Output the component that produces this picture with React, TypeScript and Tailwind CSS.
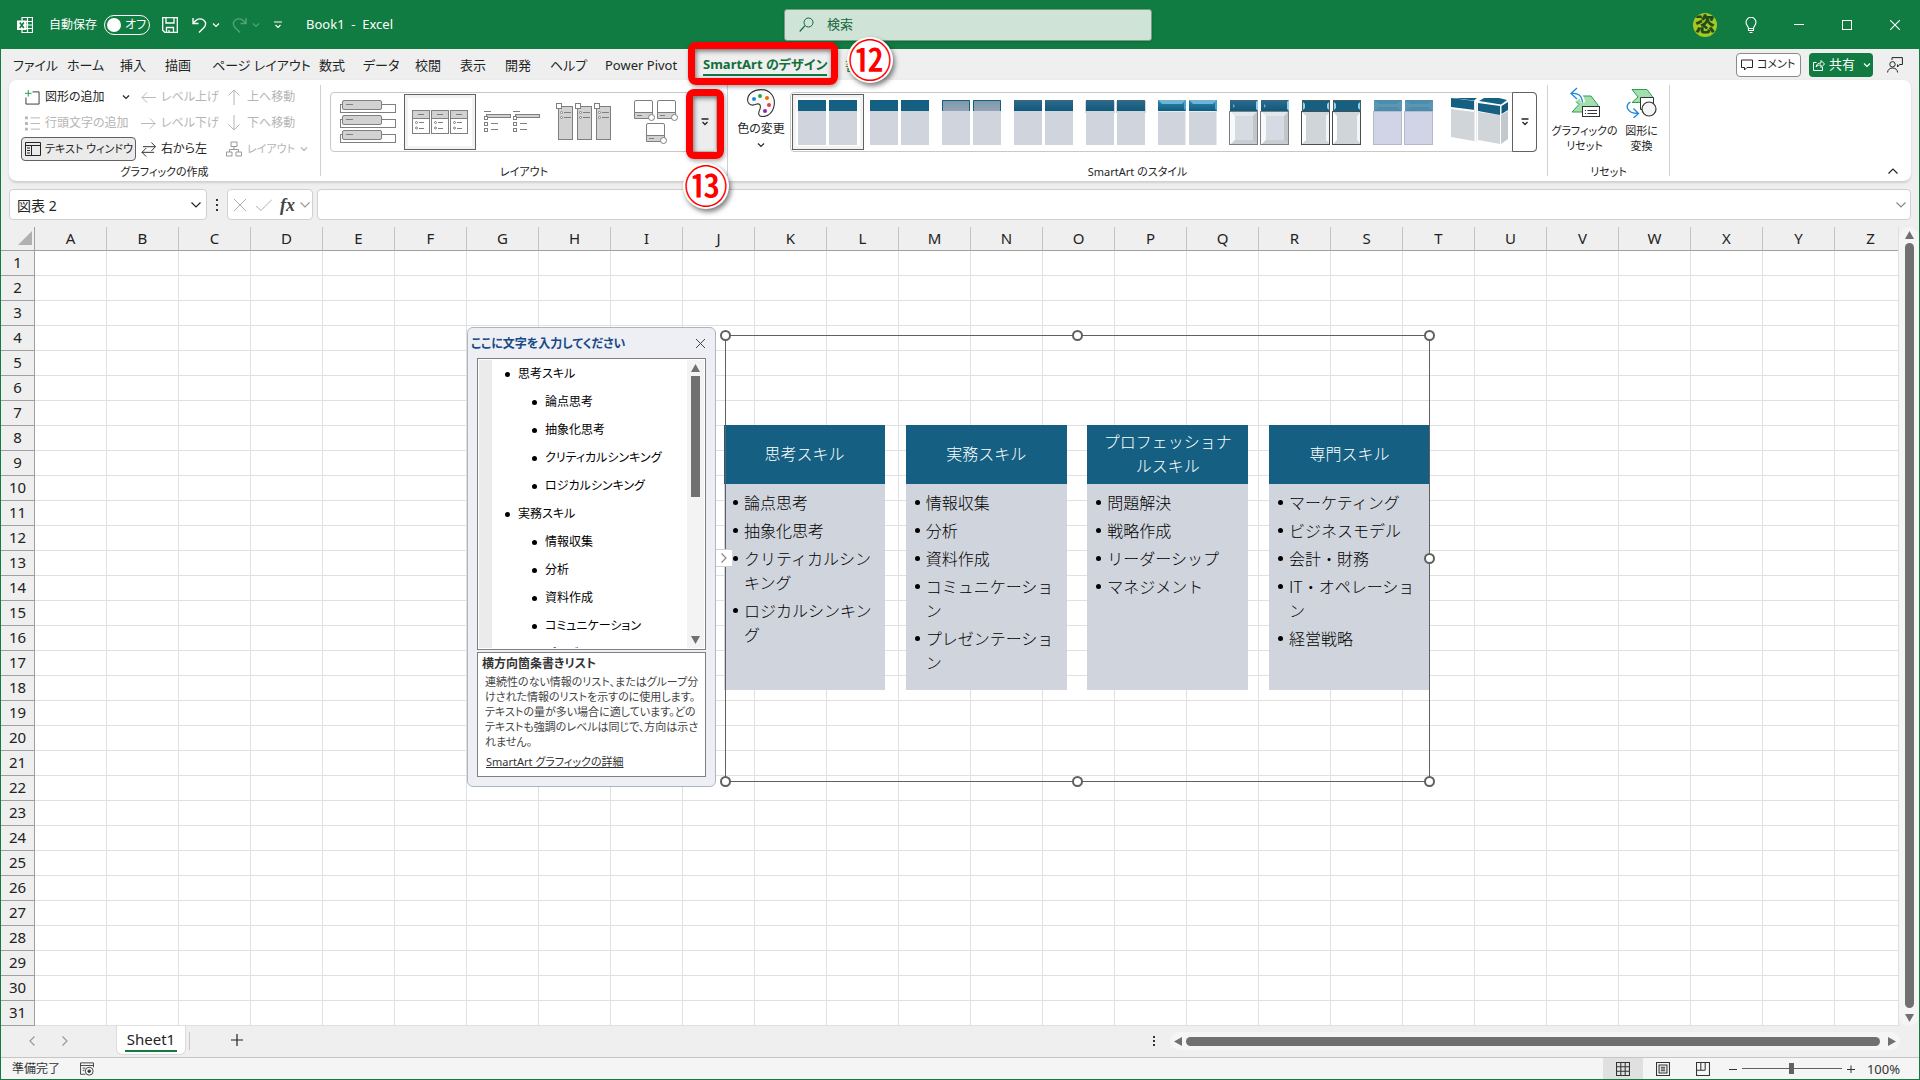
import React, { useState } from 'react';
import { clsx } from 'clsx';

interface IconProps {
  className?: string;
  children?: React.ReactNode;
  box?: string;
}

const Icon = ({ className, children, box = '0 0 16 16' }: IconProps) => (
  <svg className={clsx('flex-shrink-0', className)} viewBox={box} fill="none" stroke="currentColor" aria-hidden="true">
    {children}
  </svg>
);

const Chevron = ({ className }: { className?: string }) => (
  <Icon className={className} box="0 0 8 8">
    <path d="M1 2.5l3 3 3-3" strokeWidth="1.2" />
  </Icon>
);

const BigChevron = ({ className }: { className?: string }) => (
  <Icon className={className} box="0 0 12 12">
    <path d="M1.500 3.500l4.500 4.500 4.500-4.500" strokeWidth="1.2" />
  </Icon>
);

/* ---------- データ ---------- */

const tabs = [
  { label: 'ファイル', width: 'w-[54px]' },
  { label: 'ホーム', width: 'w-[53px]' },
  { label: '挿入', width: 'w-[45px]' },
  { label: '描画', width: 'w-[47px]' },
  { label: 'ページ レイアウト', width: 'w-[107px]' },
  { label: '数式', width: 'w-[44px]' },
  { label: 'データ', width: 'w-[52px]' },
  { label: '校閲', width: 'w-[45px]' },
  { label: '表示', width: 'w-[45px]' },
  { label: '開発', width: 'w-[45px]' },
  { label: 'ヘルプ', width: 'w-[55px]' },
  { label: 'Power Pivot', width: 'w-[98px]' },
];

const columns = 'ABCDEFGHIJKLMNOPQRSTUVWXYZ'.split('');
const rows = Array.from({ length: 31 }, (_, i) => i + 1);

const skills = [
  { title: '思考スキル', items: ['論点思考', '抽象化思考', 'クリティカルシンキング', 'ロジカルシンキング'] },
  { title: '実務スキル', items: ['情報収集', '分析', '資料作成', 'コミュニケーション', 'プレゼンテーション'] },
  { title: 'プロフェッショナルスキル', items: ['問題解決', '戦略作成', 'リーダーシップ', 'マネジメント'] },
  { title: '専門スキル', items: ['マーケティング', 'ビジネスモデル', '会計・財務', 'IT・オペレーション', '経営戦略'] },
];

// スクロール位置で見えている分だけ
const paneSkills = skills.slice(0, 2);

/* ---------- タイトルバー ---------- */

const TitleBar = () => {
  const [autoSave, setAutoSave] = useState(false);

  return (
    <header className="grid h-[49px] flex-shrink-0 grid-cols-[783fr_368fr_767fr] items-center bg-[#107c41] text-white">
      <div className="flex items-center pl-4">
        <Icon className="h-4 w-4">
          <path d="M5 .5h10.500v15H5zM5 4.500h10.500M5 8h10.500M5 11.500h10.500M10.500 .5v15" strokeWidth="1.2" />
          <rect x="0" y="3.500" width="9.500" height="9.500" fill="#fff" stroke="none" />
          <path d="M2.800 5.500l4 5.500M6.800 5.500l-4 5.500" stroke="#107c41" strokeWidth="1.600" />
        </Icon>
        <label className="ml-4 flex cursor-pointer items-center gap-[7px]">
          <span className="text-xs">自動保存</span>
          <input type="checkbox" className="sr-only" checked={autoSave} onChange={e => setAutoSave(e.target.checked)} />
          <span className="flex h-5 w-[46px] items-center gap-1 rounded-full border border-white pl-0.5">
            <span className="h-[14px] w-[14px] rounded-full bg-white" />
            <span className="text-xs leading-4">オフ</span>
          </span>
        </label>
        <button aria-label="上書き保存" className="ml-3">
          <Icon className="h-4 w-4">
            <path d="M.7 .7h14.600v14.600H2.700l-2-2zM4 .7v5.300h8V.7M4.500 15v-4.500h7V15M7 15v-2" strokeWidth="1.3" />
          </Icon>
        </button>
        <button aria-label="元に戻す" className="ml-[14px] flex items-center gap-1">
          <Icon className="h-4 w-4">
            <path d="M1 1v5.500h5.500M1.500 6C4 2.500 8 .5 11.500 3c3 2.300 2.500 5.500 .5 7.500l-5 5" strokeWidth="1.4" />
          </Icon>
          <Chevron className="h-2 w-2" />
        </button>
        <button aria-label="やり直し" className="ml-3 flex items-center gap-1 text-[#4fa574]">
          <Icon className="h-4 w-4">
            <path d="M14 1v5.500H8.500M13.500 6C11 2.500 7 .5 3.500 3 .5 5.300 1 8.500 3 10.500l5 5" strokeWidth="1.4" />
          </Icon>
          <Chevron className="h-2 w-2" />
        </button>
        <button aria-label="クイック アクセス ツール バーのカスタマイズ" className="ml-[14px]">
          <Icon className="h-2 w-2" box="0 0 8 8">
            <path d="M0 1h8M1.500 4l2.500 2.500L6.500 4" strokeWidth="1.2" />
          </Icon>
        </button>
        <span className="ml-6 text-[13px] whitespace-pre">Book1  -  Excel</span>
      </div>

      <label className="flex h-8 items-center gap-3 rounded-[3px] border border-[#7d9a88] bg-[#cfe3d7] pl-[14px] text-[#13683a] shadow-sm">
        <Icon className="h-4 w-4">
          <circle cx="9.500" cy="5.500" r="4.500" />
          <path d="M6 8.700L.7 14.500" strokeWidth="1.2" />
        </Icon>
        <input aria-label="検索" placeholder="検索" className="min-w-0 flex-1 bg-transparent text-[13px] outline-none placeholder:text-[#13683a] placeholder:opacity-100" />
      </label>

      <div className="flex items-center justify-end">
        <span className="mr-2.5 flex h-6 w-6 items-center justify-center overflow-hidden rounded-full bg-[#a6c823] text-[20px] leading-6 font-black text-[#1f4a1c]">
          恣
        </span>
        <button aria-label="ヒント" className="flex h-12 w-12 items-center justify-center">
          <Icon className="h-4 w-4">
            <path d="M5.500 11.500C5.500 9 3 8.500 3 5.300a5 5 0 0110 0c0 3.200-2.500 3.700-2.500 6.200zM5.500 11.500v2h5v-2M6.500 15.500h3" strokeWidth="1.1" />
          </Icon>
        </button>
        <button aria-label="最小化" className="flex h-12 w-12 items-center justify-center">
          <Icon className="h-[10px] w-[10px]" box="0 0 10 10"><path d="M0 4.500h10" /></Icon>
        </button>
        <button aria-label="最大化" className="flex h-12 w-12 items-center justify-center">
          <Icon className="h-[10px] w-[10px]" box="0 0 10 10"><rect x=".5" y=".5" width="9" height="9" /></Icon>
        </button>
        <button aria-label="閉じる" className="flex h-12 w-12 items-center justify-center">
          <Icon className="h-[10px] w-[10px]" box="0 0 10 10"><path d="M0 0l10 10M10 0L0 10" strokeWidth="1.1" /></Icon>
        </button>
      </div>
    </header>
  );
};

/* ---------- 注釈 ---------- */

const StepBadge = ({ children, className }: { children: string; className: string }) => (
  <span
    className={clsx(
      'pointer-events-none absolute z-30 flex h-[46px] w-[46px] items-center justify-center rounded-full bg-white',
      'text-[44px] leading-[46px] font-medium text-[#ff0000] shadow-[2px_3px_5px_rgba(0,0,0,0.5)]',
      className
    )}
  >
    {children}
  </span>
);

const Highlight = ({ className }: { className: string }) => (
  <span
    className={clsx(
      'pointer-events-none absolute z-20 rounded-[8px] border-[7px] border-[#ff0000]',
      'shadow-[1px_2px_4px_rgba(0,0,0,0.35),inset_1px_2px_5px_rgba(0,0,0,0.55)]',
      className
    )}
  />
);

/* ---------- タブ ---------- */

const RibbonTabs = () => (
  <nav className="flex h-[31px] flex-shrink-0 items-center pl-3 text-[13px] text-[#242424]">
    {tabs.map(tab => (
      <button key={tab.label} className={clsx('flex-shrink-0 pt-0.5 text-left whitespace-nowrap', tab.width)}>
        {tab.label}
      </button>
    ))}
    <div className="relative flex h-[31px] w-[142px] flex-shrink-0 items-center">
      <button className="border-b-2 border-[#107c41] pt-0.5 font-bold whitespace-nowrap text-[#0f703b]">SmartArt のデザイン</button>
      <Highlight className="top-[-7px] left-[-15px] h-[43px] w-[150px]" />
      <StepBadge className="top-[-12px] left-[144px]">⑫</StepBadge>
    </div>
    <button className="pt-0.5 text-[#0f703b]">書式</button>

    <div className="ml-auto flex items-center pr-4">
      <button className="flex h-6 w-[65px] items-center gap-1 rounded border border-[#8a8a8a] bg-white pl-1 text-[11px] whitespace-nowrap">
        <Icon className="h-3 w-3" box="0 0 12 12"><path d="M.5 1h11v7.500H6l-2.500 2.500V8.500h-3z" /></Icon>
        コメント
      </button>
      <button className="ml-2 flex h-6 w-16 items-center gap-1 rounded bg-[#107c41] pl-1 text-[13px] text-white">
        <Icon className="h-3 w-3" box="0 0 12 12">
          <path d="M3.500 3.500h-3v8h9V8M3 8c.5-3 2.500-4 5-4V1.500l3.500 3.500L8 8.500V6C6 6 4.500 6.300 3 8z" />
        </Icon>
        共有
        <Chevron className="ml-1 h-2 w-2" />
      </button>
      <button aria-label="アカウント" className="ml-[14px]">
        <Icon className="h-4 w-4">
          <path d="M5 3V.6h10.400v6.900h-2.900L10.500 10V7.500M.6 15.500c0-6 10-6 10 0" />
          <circle cx="5.500" cy="7.300" r="2.700" />
        </Icon>
      </button>
    </div>
  </nav>
);

/* ---------- リボン ---------- */

const RibbonGroup = ({ label, className, children }: { label: string; className: string; children: React.ReactNode }) => (
  <section className={clsx('my-[5px] flex flex-shrink-0 flex-col border-r border-[#d0d0d0]', className)}>
    <div className="flex-1">{children}</div>
    <h2 className="h-3 text-center text-[11px] leading-4">{label}</h2>
  </section>
);

const GraphicGroup = () => (
  <RibbonGroup label="グラフィックの作成" className="w-[312px]">
    <div className="grid grid-cols-[120px_85px_auto] items-center gap-y-0.5 pl-3 text-xs whitespace-nowrap">
      <button className="flex h-6 items-center gap-[5px] pl-1">
        <Icon className="h-[15px] w-[15px]">
          <path d="M8 2h7v13H1V8" stroke="#333" />
          <path d="M3.500 0v7M0 3.500h7" stroke="#1a9a4b" />
        </Icon>
        図形の追加
        <Chevron className="ml-3 h-2 w-2" />
      </button>
      <button className="flex h-6 items-center gap-[5px] text-[#b5b5b5]">
        <Icon className="h-[15px] w-[15px]"><path d="M16 8H1M6.500 2.500L1 8l5.500 5.500" /></Icon>
        レベル上げ
      </button>
      <button className="flex h-6 items-center gap-[5px] text-[#b5b5b5]">
        <Icon className="h-4 w-4"><path d="M8 16V1M2.500 6.500L8 1l5.500 5.500" /></Icon>
        上へ移動
      </button>

      <button className="flex h-6 items-center gap-[5px] pl-1 text-[#b5b5b5]">
        <Icon className="h-[15px] w-[15px]">
          <path d="M6 2h10M6 8h10M6 14h10" />
          <path d="M0 2h3M0 8h3M0 14h3" strokeWidth="3" />
        </Icon>
        行頭文字の追加
      </button>
      <button className="flex h-6 items-center gap-[5px] text-[#b5b5b5]">
        <Icon className="h-[15px] w-[15px]"><path d="M0 8h15M9.500 2.500L15 8l-5.500 5.500" /></Icon>
        レベル下げ
      </button>
      <button className="flex h-6 items-center gap-[5px] text-[#b5b5b5]">
        <Icon className="h-4 w-4"><path d="M8 0v15M2.500 9.500L8 15l5.500-5.500" /></Icon>
        下へ移動
      </button>

      <button aria-pressed="true" className="flex h-6 w-[115px] items-center gap-1 rounded border border-[#616161] bg-[#ebebeb] pl-[3px] text-[11px]">
        <Icon className="h-4 w-4">
          <path d="M.5 1.500h15v13H.5zM.5 4.500h15M6.500 4.500v10M2 7h3M2 9.500h3M2 12h3" />
        </Icon>
        テキスト ウィンドウ
      </button>
      <button className="flex h-6 items-center gap-[5px]">
        <Icon className="h-[15px] w-[15px]">
          <path d="M2 5h13M11 .5L15.500 5 11 9.500M14 11H1M5.500 6.500L1 11l4.500 4.500" />
        </Icon>
        右から左
      </button>
      <button className="flex h-6 items-center gap-[5px] text-[#b5b5b5]">
        <Icon className="h-4 w-4">
          <path d="M5 1h6v4.500H5zM.5 11h5.500v4H.5zM10 11h5.500v4H10zM8 5.500v3M3.500 11V8.500h9V11" stroke="#999" />
        </Icon>
        <span className="text-[11px]">レイアウト</span>
        <Chevron className="h-2 w-2" />
      </button>
    </div>
  </RibbonGroup>
);

const layoutDrawings = [
  <g key="block">
    {[0, 15, 30].map(y => (
      <g key={y}>
        <rect x="8.500" y={10.5 + y} width="55" height="8" fill="#fff" />
        <rect x="10.500" y={6.5 + y} width="39" height="9" rx="1.500" fill="#d2d2d2" />
        <path d={`M14 ${10.5 + y}h7`} />
      </g>
    ))}
  </g>,
  <g key="hlist">
    {[0, 19, 38].map(x => (
      <g key={x}>
        <rect x={8.5 + x} y="16.500" width="17" height="23" fill="#fff" />
        <rect x={8.5 + x} y="16.500" width="17" height="8" fill="#d2d2d2" />
        <path d={`M${14 + x} 20.500h6M${15 + x} 28.500h5M${15 + x} 34.500h5`} />
        <circle cx={12.5 + x} cy="28.500" r="1" />
        <circle cx={12.5 + x} cy="34" r="1" />
      </g>
    ))}
  </g>,
  <g key="square">
    {[0, 29].map(x => (
      <g key={x}>
        <path d={`M${8 + x} 17.500h7M${15 + x} 29.500h7M${15 + x} 35.500h7`} />
        <rect x={10.5 + x} y="20.500" width="24" height="3" fill="#d2d2d2" />
        {[22.5, 28.5, 34.5].map(y => <rect key={y} x={8.5 + x} y={y} width="3" height="3" fill="#fff" />)}
      </g>
    ))}
  </g>,
  <g key="pillar">
    {[0, 19, 38].map(x => (
      <g key={x}>
        <rect x={10.5 + x} y="12.500" width="14" height="33" fill="#d2d2d2" />
        <rect x={8.5 + x} y="9.500" width="5" height="5" fill="#fff" />
        <circle cx={13.5 + x} cy="18.500" r="1" fill="#fff" />
        <circle cx={13.5 + x} cy="23.500" r="1" fill="#fff" />
        <path d={`M${16 + x} 18.500h7M${16 + x} 23.500h7`} />
      </g>
    ))}
  </g>,
  <g key="picture">
    {[[0, 0], [23, 0], [12, 23]].map(([x, y]) => (
      <g key={`${x}-${y}`}>
        <rect x={14.5 + x} y={6.5 + y} width="18" height="18" rx="1.500" fill="#fff" />
        <path d={`M${14.5 + x} ${18.5 + y}h18v6h-18z`} fill="#d2d2d2" />
        <path d={`M${17 + x} ${21.5 + y}h5`} />
        <circle cx={31.5 + x} cy={23.5 + y} r="3" fill="#fff" />
      </g>
    ))}
  </g>,
];

const MoreButton = ({ label, className }: { label: string; className?: string }) => (
  <button aria-label={label} className={clsx('flex w-6 items-center justify-center border-l border-[#616161]', className)}>
    <Icon className="h-2 w-2" box="0 0 8 8">
      <path d="M.5 1h7M1.500 4l2.500 2.500L6.500 4" strokeWidth="1.3" />
    </Icon>
  </button>
);

const LayoutGroup = () => (
  <RibbonGroup label="レイアウト" className="w-[407px]">
    <div className="relative mt-[7px] ml-[9px] flex h-[60px] w-[387px] rounded border border-[#c8c8c8] pl-px">
      {layoutDrawings.map((drawing, i) => (
        <button
          key={i}
          aria-label={`レイアウト ${i + 1}`}
          className={clsx('my-px h-[56px] w-[72px] flex-shrink-0', i === 1 && 'bg-white outline-1 -outline-offset-1 outline-[#616161]')}
        >
          <svg className="h-[56px] w-[72px]" viewBox="0 0 72 56" fill="none" stroke="#7f7f7f">
            {i === 1 && <rect x="2.500" y="2.500" width="67" height="51" stroke="#f3f3f3" strokeWidth="3" />}
            {drawing}
          </svg>
        </button>
      ))}
      <MoreButton label="その他のレイアウト" className="bg-[#ededed]" />
      <Highlight className="top-[-4px] left-[355px] h-[70px] w-[38px]" />
      <StepBadge className="top-[70px] left-[352px]">⑬</StepBadge>
    </div>
  </RibbonGroup>
);

interface StyleLook {
  head: string;
  body: string;
  edge?: string;
  headEdge?: string;
  bevel?: 'top' | 'side' | 'both' | 'soft';
  shadow?: boolean;
}

const styleLooks: StyleLook[] = [
  { head: '#156082', body: '#d0d5dd' },
  { head: '#156082', body: '#d0d5dd' },
  { head: 'url(#dim)', body: '#d0d5dd', headEdge: '#156082' },
  { head: 'url(#deep)', body: '#d0d5dd' },
  { head: 'url(#deep)', body: '#d0d5dd', shadow: true },
  { head: 'url(#gloss)', body: '#d0d5dd', bevel: 'top' },
  { head: 'url(#deep)', body: '#d6dbe3', edge: '#7b7d80', bevel: 'side' },
  { head: '#156082', body: '#d0d5d9', edge: '#4a4c4e', headEdge: '#4a5c55', bevel: 'both' },
  { head: '#5b97b5', body: '#d0d4e6', edge: '#b4b9cc', bevel: 'soft' },
];

const StyleThumb = ({ look }: { look: StyleLook }) => (
  <>
    {[6, 37].map(x => (
      <g key={x}>
        {look.shadow && <rect x={x - 1} y="7" width="30" height="12" fill="#b9bcc2" opacity="0.6" />}
        <rect x={x} y="17" width="28" height="34" fill={look.body} />
        <rect x={x} y="6" width="28" height="11" fill={look.head} />
        {look.headEdge && <path d={`M${x + 0.5} 17V6.500h27V17`} stroke={look.headEdge} />}
        {look.bevel === 'top' && (
          <>
            <path d={`M${x} 6h28l-4 4h-20z`} fill="#6db4d6" />
            <path d={`M${x + 28} 6v11l-2-2V8z`} fill="#4aa3cc" />
            <path d={`M${x} 17.500h28M${x + 27.5} 18v33`} stroke="#e6ebf1" />
          </>
        )}
        {look.bevel === 'side' && (
          <>
            <path d={`M${x} 17h28l-5 5H${x + 5}z`} fill="#e3e7ec" />
            <path d={`M${x} 17l5 5v24l-5 5z`} fill="#f7f9fb" />
            <path d={`M${x + 28} 17l-5 5v24l5 5z`} fill="#c2c6cb" />
            <path d={`M${x} 51h28l-5-5H${x + 5}z`} fill="#c9cdd2" />
            <path d={`M${x + 28} 6v11l-2-2V8z`} fill="#8fd0ee" />
            <path d={`M${x + 3} 10l2 2-2 2z`} fill="#5fb2d8" />
          </>
        )}
        {look.bevel === 'both' && (
          <>
            <path d={`M${x} 18l4 4v24l-4 4z`} fill="#fff" />
            <path d={`M${x + 28} 18l-4 4v24l4 4z`} fill="#f3f5f7" />
            <path d={`M${x + 27} 8l-2 2v4l2 2z`} fill="#8fd0ee" />
            <path d={`M${x + 1} 8l2 2v4l-2 2z`} fill="#8fd0ee" />
          </>
        )}
        {look.bevel === 'soft' && <path d={`M${x} 6h28l-5 4h-18zM${x} 17l5-4h18l5 4z`} fill="#4788a9" opacity="0.7" />}
        {look.edge && <rect x={x - 0.5} y="17.500" width="28" height="33" stroke={look.edge} />}
      </g>
    ))}
  </>
);

const StyleGroup = () => (
  <RibbonGroup label="SmartArt のスタイル" className="w-[820px]">
    <div className="flex">
      <button className="flex w-[62px] flex-shrink-0 flex-col items-center pt-1 pl-1 text-xs whitespace-nowrap">
        <svg className="h-7 w-7" viewBox="0 0 28 28" fill="none" stroke="#333" strokeWidth="1.1">
          <path d="M14 .6c8 0 13.400 5.500 13.400 13 0 8-5 14-12 14-3.500 0-4.500-2.600-3-6 1.500-3.500 1.500-5.100 0-6.300-2-1.600-3.400.7-6.400.8C2.500 16.200.6 14 .6 11 .6 5 6.500.6 14 .6z" fill="#fafafa" />
          <g stroke="none">
            <circle cx="7" cy="10" r="2" fill="#1e88d6" />
            <circle cx="13" cy="7" r="2" fill="#2f9e4f" />
            <circle cx="20" cy="9" r="2" fill="#e0700b" />
            <circle cx="22" cy="16" r="2" fill="#e93c3c" />
            <circle cx="18" cy="22" r="2" fill="#8e2aa8" />
          </g>
        </svg>
        <span className="mt-1 leading-4">色の変更</span>
        <Chevron className="mt-1 h-2 w-2" />
      </button>
      <div className="mt-[7px] flex h-[60px] w-[747px] rounded border border-[#c8c8c8] pl-px">
        {styleLooks.map((look, i) => (
          <button
            key={i}
            aria-label={`スタイル ${i + 1}`}
            className={clsx('my-px h-[56px] w-[72px] flex-shrink-0', i === 0 && 'outline-1 -outline-offset-1 outline-[#616161]')}
          >
            <svg className="h-[56px] w-[72px]" viewBox="0 0 72 56" fill="none">
              <defs>
                <linearGradient id="dim" x1="0" y1="0" x2="0" y2="1"><stop stopColor="#7d97ab" /><stop offset="1" stopColor="#94a6b7" /></linearGradient>
                <linearGradient id="deep" x1="0" y1="0" x2="0" y2="1"><stop stopColor="#34698a" /><stop offset="1" stopColor="#0d5a7c" /></linearGradient>
                <linearGradient id="gloss" x1="0" y1="0" x2="0" y2="1"><stop stopColor="#2f86ac" /><stop offset="1" stopColor="#0f5d80" /></linearGradient>
              </defs>
              {i === 0 && <rect x="2.500" y="2.500" width="67" height="51" stroke="#f3f3f3" strokeWidth="3" />}
              <StyleThumb look={look} />
            </svg>
          </button>
        ))}
        <button aria-label="スタイル 10" className="my-px h-[56px] w-[72px] flex-shrink-0">
          <svg className="h-[56px] w-[72px]" viewBox="0 0 72 56" fill="none">
            <path d="M11 15l23 3v29l-23-4zM38 18l22 3v29l-22-4z" fill="#d0d5d9" />
            <path d="M61 21l7-4v28l-7 5z" fill="#c3c8cc" />
            <path d="M11 4l24 3v9l-24-3zM38 9l22 3v9l-22-4z" fill="#156082" />
            <path d="M12 4h25l-3 2.500zM39 7l5-3h15l8 2-6 4.500z" fill="#156082" />
            <path d="M61.500 12l6.500-4v8l-6.500 4z" fill="#125a7c" />
            <path d="M34.500 7v40M36.500 8v40" stroke="#e4e9ec" />
          </svg>
        </button>
        <MoreButton label="その他のスタイル" className="-my-px -mr-px w-[25px] rounded-r border-y border-r" />
      </div>
    </div>
  </RibbonGroup>
);

const ResetGroup = () => (
  <RibbonGroup label="リセット" className="w-[122px]">
    <div className="flex justify-center gap-1 pt-0.5 text-[11px] leading-[15px] whitespace-nowrap">
      <button className="flex w-[62px] flex-col items-center">
        <svg className="h-[31px] w-[31px]" viewBox="0 0 31 31" fill="none">
          <path d="M13 9h9l7 9v7H3l7-7.500-3-3" fill="#a3dfae" stroke="#2f9e4f" />
          <path d="M8.500 1L2 6.500 8 12M2.500 6.500c7-1 11 2 11.500 9" stroke="#fff" strokeWidth="4" />
          <path d="M8 1L2 6.500 8 12M2 6.500c7-1 11 2 11.500 9" stroke="#1e88d6" strokeWidth="1.300" />
          <rect x="13.500" y="19.500" width="17" height="10" fill="#fff" stroke="#333" />
          <path d="M16 23.500h1M18.500 23.500h9.500M16 26.500h1M18.500 26.500h9.500" stroke="#333" />
        </svg>
        <span className="mt-[5px]">グラフィックの<br />リセット</span>
      </button>
      <button className="flex w-11 flex-col items-center">
        <svg className="h-[31px] w-[31px]" viewBox="0 0 31 31" fill="none">
          <path d="M6 2.500h15l6 8v5H6l6-5.500z" fill="#a3dfae" stroke="#2f9e4f" />
          <path d="M14.500 10.500h13v12h-13z" fill="#fff" stroke="#333" />
          <circle cx="23" cy="22" r="7" fill="#f5f5f5" stroke="#333" strokeWidth="1.200" />
          <path d="M4.500 15C-1 18 0 26 12 26.500M7.500 21.500l5 5-5 4.500" stroke="#1e88d6" strokeWidth="1.300" />
        </svg>
        <span className="mt-[5px]">図形に<br />変換</span>
      </button>
    </div>
  </RibbonGroup>
);

const Ribbon = () => (
  <div className="mx-2 flex h-[102px] flex-shrink-0 rounded-lg border-b border-[#d0d0d0] bg-white shadow-sm">
    <GraphicGroup />
    <LayoutGroup />
    <StyleGroup />
    <ResetGroup />
    <button aria-label="リボンを折りたたむ" className="mt-auto mr-3 mb-1 ml-auto">
      <BigChevron className="h-3 w-3 rotate-180" />
    </button>
  </div>
);

/* ---------- 数式バー ---------- */

const FormulaBar = () => (
  <div className="flex flex-shrink-0 px-2 py-[7px]">
    <div className="flex h-[31px] w-[198px] items-center rounded border border-[#d0d0d0] bg-white pr-1 pl-[7px]">
      <input aria-label="名前ボックス" defaultValue="図表 2" className="min-w-0 flex-1 pt-0.5 text-[14px] outline-none" />
      <button aria-label="名前の一覧"><BigChevron className="h-3 w-3" /></button>
    </div>
    <span className="flex w-5 flex-col items-center justify-center gap-[3px]">
      <i className="h-0.5 w-0.5 bg-[#333]" />
      <i className="h-0.5 w-0.5 bg-[#333]" />
      <i className="h-0.5 w-0.5 bg-[#333]" />
    </span>
    <div className="flex h-[31px] w-[86px] items-center rounded border border-[#d0d0d0] bg-white pl-1.5">
      <button aria-label="キャンセル" className="text-[#b0b0b0]"><Icon className="h-3 w-3" box="0 0 12 12"><path d="M0 0l12 12M12 0L0 12" /></Icon></button>
      <button aria-label="入力" className="ml-2.5 text-[#b0b0b0]"><Icon className="h-4 w-4"><path d="M0 9l5 4.500L16 2.500" /></Icon></button>
      <button aria-label="関数の挿入" className="ml-2 font-['Liberation_Serif',serif] text-lg leading-5 font-bold text-[#444] italic">fx</button>
      <BigChevron className="ml-1 h-3 w-3 text-[#999]" />
    </div>
    <div className="ml-1 flex h-[31px] flex-1 items-center rounded border border-[#d0d0d0] bg-white pr-[3px]">
      <input aria-label="数式バー" className="min-w-0 flex-1 px-2 text-sm outline-none" />
      <button aria-label="数式バーの展開" className="text-[#888]"><BigChevron className="h-3 w-3" /></button>
    </div>
  </div>
);

/* ---------- テキスト ウィンドウ ---------- */

const TextPane = () => (
  <aside className="absolute top-[100px] left-[466px] flex h-[460px] w-[249px] flex-col rounded-md border border-[#a9b8bf] bg-[#eeeef5]">
    <div className="flex h-[30px] flex-shrink-0 items-center justify-between pr-[10px] pl-[3px]">
      <h3 className="pt-0.5 text-xs font-bold text-[#174a86]">ここに文字を入力してください</h3>
      <button aria-label="テキスト ウィンドウを閉じる" className="text-[#444]">
        <Icon className="h-[9px] w-[9px]" box="0 0 9 9"><path d="M0 0l9 9M9 0L0 9" /></Icon>
      </button>
    </div>
    <div className="mx-[9px] flex h-[292px] flex-shrink-0 overflow-hidden border border-[#7f7f84] bg-white p-px">
      <div className="w-[13px] bg-[#ebebeb]" />
      <ul className="flex-1 overflow-hidden text-xs leading-7 whitespace-nowrap text-black">
        {paneSkills.map(skill => (
          <li key={skill.title}>
            <div className="flex items-center gap-2 pl-[13px]">
              <i className="h-[5px] w-[5px] rounded-full bg-black" />
              {skill.title}
            </div>
            <ul>
              {skill.items.map(item => (
                <li key={item} className="flex items-center gap-2 pl-10">
                  <i className="h-[5px] w-[5px] rounded-full bg-black" />
                  {item}
                </li>
              ))}
            </ul>
          </li>
        ))}
      </ul>
      <div className="flex w-[17px] flex-col items-center bg-[#f3f3f3] py-1 text-[#707070]">
        <Icon className="h-2 w-[9px]" box="0 0 9 8"><path d="M4.500 0L9 8H0z" fill="currentColor" stroke="none" /></Icon>
        <div className="mt-1 h-[121px] w-[9px] bg-[#707070]" />
        <Icon className="mt-auto h-2 w-[9px]" box="0 0 9 8"><path d="M4.500 8L9 0H0z" fill="currentColor" stroke="none" /></Icon>
      </div>
    </div>
    <div className="mx-[9px] mt-0.5 h-[125px] flex-shrink-0 border border-[#7f7f84] bg-white pt-[3px] pl-1 text-[#333]">
      <h4 className="text-xs leading-4 font-bold">横方向箇条書きリスト</h4>
      <p className="mt-0.5 pl-[3px] text-[11px] leading-[15px] whitespace-nowrap text-[#444]">
        連続性のない情報のリスト、またはグループ分
        <br />
        けされた情報のリストを示すのに使用します。
        <br />
        テキストの量が多い場合に適しています。どの
        <br />
        テキストも強調のレベルは同じで、方向は示さ
        <br />
        れません。
      </p>
      <a href="#smartart" className="mt-[5px] block pl-1 text-[11px] leading-4 underline">SmartArt グラフィックの詳細</a>
    </div>
  </aside>
);

/* ---------- SmartArt ---------- */

const handles = [
  'top-[-6px] left-[-6px]',
  'top-[-6px] left-1/2 -ml-[6px]',
  'top-[-6px] right-[-6px]',
  'top-1/2 right-[-6px] -mt-[6px]',
  'bottom-[-6px] left-[-6px]',
  'bottom-[-6px] left-1/2 -ml-[6px]',
  'bottom-[-6px] right-[-6px]',
];

const SmartArt = () => (
  <figure className="absolute top-[108px] left-[724px] h-[447px] w-[705px] border border-[#606060]">
    <div className="-mr-px -ml-[2px] flex justify-between pt-[89px] font-['Noto_Sans_CJK_JP',sans-serif] text-base leading-6 font-light [font-feature-settings:normal]">
      {skills.map(skill => (
        <div key={skill.title} className="w-[161px]">
          <h3 className="flex h-[59px] items-center justify-center bg-[#156082] px-4 pb-1 text-center break-all text-white">{skill.title}</h3>
          <ul className="h-[206px] space-y-1 bg-[#cdd2db]/95 pt-1.5 pr-2 pl-[9px] text-black">
            {skill.items.map(item => (
              <li key={item} className="flex gap-1.5">
                <i className="mt-[10px] h-[5px] w-[5px] flex-shrink-0 rounded-full bg-black" />
                <span className="break-all">{item}</span>
              </li>
            ))}
          </ul>
        </div>
      ))}
    </div>
    <span className="pointer-events-none absolute inset-y-0 left-[-1px] w-px bg-[#606060]" />
    <span className="pointer-events-none absolute inset-y-0 right-[-1px] w-px bg-[#606060]" />
    {handles.map(place => (
      <span key={place} className={clsx('absolute h-[11px] w-[11px] rounded-full border-2 border-[#606060] bg-white', place)} />
    ))}
    <button aria-label="テキスト ウィンドウの表示" className="absolute top-[213px] left-[-10px] flex h-[18px] w-4 items-center justify-center border-y border-[#d0d0d0] bg-white text-[#888]">
      <BigChevron className="h-3 w-3 -rotate-90" />
    </button>
  </figure>
);

/* ---------- シート ---------- */

const Sheet = () => (
  <main className="flex min-h-0 flex-1">
    <div className="relative min-w-0 flex-1 overflow-hidden border-r border-[#e0e0e0] bg-white">
      <table className="w-[1906px] table-fixed border-separate border-spacing-0 text-[15px] leading-5 text-[#222]">
        <thead>
          <tr className="h-6 bg-[#efefef]">
            <th aria-label="すべて選択" className="w-[34px] border-r border-b border-[#a0a0a0] p-0">
              <Icon className="ml-auto h-4 w-4 pr-0.5 pb-0.5 text-[#b0b0b0]">
                <path d="M16 0v16H0z" fill="currentColor" stroke="none" />
              </Icon>
            </th>
            {columns.map(column => (
              <th key={column} scope="col" className="w-[72px] border-r border-b border-r-[#c4c4c4] border-b-[#a0a0a0] p-0 pb-0.5 font-normal">
                {column}
              </th>
            ))}
          </tr>
        </thead>
        <tbody>
          {rows.map(row => (
            <tr key={row} className="h-[25px]">
              <th scope="row" className="border-r border-b border-[#a0a0a0] bg-[#efefef] p-0 pb-0.5 font-normal">{row}</th>
              {columns.map(column => (
                <td key={column} className="border-r border-b border-[#e0e0e0] p-0" />
              ))}
            </tr>
          ))}
        </tbody>
      </table>
      <SmartArt />
      <TextPane />
    </div>
    <div className="flex w-5 flex-shrink-0 flex-col items-center rounded-full bg-[#f5f5f5] py-1 text-[#707070]">
      <Icon className="h-2 w-[9px]" box="0 0 9 8"><path d="M4.500 0L9 8H0z" fill="currentColor" stroke="none" /></Icon>
      <div className="mt-1 mb-1.5 w-[9px] flex-1 rounded-full bg-[#707070]" />
      <Icon className="h-2 w-[9px]" box="0 0 9 8"><path d="M4.500 8L9 0H0z" fill="currentColor" stroke="none" /></Icon>
    </div>
  </main>
);

const SheetTabs = () => (
  <div className="flex h-[31px] flex-shrink-0 items-start">
    <div className="flex h-[29px] w-[115px] items-center gap-[21px] pl-[25px] text-[#999]">
      <button aria-label="前のシート"><BigChevron className="h-3 w-3 rotate-90" /></button>
      <button aria-label="次のシート"><BigChevron className="h-3 w-3 -rotate-90" /></button>
    </div>
    <button className="h-[29px] w-[70px] rounded-b-md border-x border-b border-[#dcdcdc] bg-white px-2">
      <span className="block border-b-2 border-[#107c41] text-[15px] leading-[22px]">Sheet1</span>
    </button>
    <span className="mt-1.5 ml-[3px] h-[18px] w-px bg-[#c8c8c8]" />
    <button aria-label="新しいシート" className="mt-2 ml-[41px]">
      <Icon className="h-3 w-3" box="0 0 12 12"><path d="M6 0v12M0 6h12" strokeWidth="1.2" /></Icon>
    </button>
    <div className="ml-auto flex items-center pt-1.5 pr-[19px]">
      <span className="mr-[15px] flex flex-col gap-[2px]">
        <i className="h-0.5 w-0.5 bg-[#333]" />
        <i className="h-0.5 w-0.5 bg-[#333]" />
        <i className="h-0.5 w-0.5 bg-[#333]" />
      </span>
      <div className="flex h-[18px] w-[38vw] items-center gap-1 rounded-full bg-[#f5f5f5] px-1 text-[#707070]">
        <Icon className="h-[9px] w-2" box="0 0 8 9"><path d="M0 4.500L8 0v9z" fill="currentColor" stroke="none" /></Icon>
        <div className="mr-1 h-[9px] flex-1 rounded-full bg-[#707070]" />
        <Icon className="h-[9px] w-2" box="0 0 8 9"><path d="M8 4.500L0 0v9z" fill="currentColor" stroke="none" /></Icon>
      </div>
    </div>
  </div>
);

const StatusBar = () => {
  const [zoom, setZoom] = useState(100);

  return (
    <footer className="flex h-[22px] flex-shrink-0 items-center border-t border-[#c6c6c6] bg-[#f5f5f5] pl-[11px] text-xs text-[#333]">
      <span>準備完了</span>
      <button aria-label="マクロの記録" className="ml-5">
        <Icon className="h-[14px] w-[14px]">
          <path d="M6 14H.6V1h14.800v5M.6 4h14.800M3 7h3M3 9.500h2" />
          <circle cx="10.500" cy="10.500" r="4.500" />
          <circle cx="10.500" cy="10.500" r="1.500" fill="currentColor" />
        </Icon>
      </button>
      <div className="ml-auto flex h-full items-center">
        <button aria-label="標準" className="flex h-full w-10 items-center justify-center bg-[#e0e0e0]">
          <Icon className="h-[14px] w-[14px]"><path d="M.6 .6h14.800v14.800H.6zM5.500 .6v14.800M10.500 .6v14.800M.6 5.500h14.800M.6 10.500h14.800" strokeWidth="1.2" /></Icon>
        </button>
        <button aria-label="ページ レイアウト" className="flex h-full w-10 items-center justify-center">
          <Icon className="h-[14px] w-[14px]"><path d="M.6 .6h14.800v14.800H.6zM3.500 3.500h9v9h-9zM5.500 6h5M5.500 8h5M5.500 10h5" strokeWidth="1.2" /></Icon>
        </button>
        <button aria-label="改ページ プレビュー" className="flex h-full w-10 items-center justify-center">
          <Icon className="h-[14px] w-[14px]"><path d="M.6 .6h14.800v14.800H.6zM5.500 .6v8.900M10.500 .6v8.900M.6 9.500h9.900" strokeWidth="1.2" /></Icon>
        </button>
        <button aria-label="縮小" className="ml-1.5"><Icon className="h-2 w-2" box="0 0 8 8"><path d="M0 4.500h8" /></Icon></button>
        <input
          type="range"
          aria-label="ズーム"
          min={0}
          max={200}
          value={zoom}
          onChange={e => setZoom(Number(e.target.value))}
          className="mx-[5px] h-4 w-[100px] appearance-none bg-[linear-gradient(#616161,#616161)] bg-[length:100%_1px] bg-center bg-no-repeat [&::-webkit-slider-thumb]:h-[11px] [&::-webkit-slider-thumb]:w-[5px] [&::-webkit-slider-thumb]:appearance-none [&::-webkit-slider-thumb]:bg-[#616161]"
        />
        <button aria-label="拡大"><Icon className="h-2 w-2" box="0 0 8 8"><path d="M0 4.500h8M4 .5v8" /></Icon></button>
        <button className="mr-[19px] ml-3 text-[13px] leading-5">{zoom}%</button>
      </div>
    </footer>
  );
};

const App = () => (
  <div className="flex h-screen flex-col overflow-hidden border-x border-b border-[#107c41] bg-[#efefef] font-['Noto_Sans','Noto_Sans_CJK_JP',sans-serif] text-[#242424] [font-feature-settings:'palt']">
    <TitleBar />
    <RibbonTabs />
    <Ribbon />
    <FormulaBar />
    <Sheet />
    <SheetTabs />
    <StatusBar />
  </div>
);

export default App;
